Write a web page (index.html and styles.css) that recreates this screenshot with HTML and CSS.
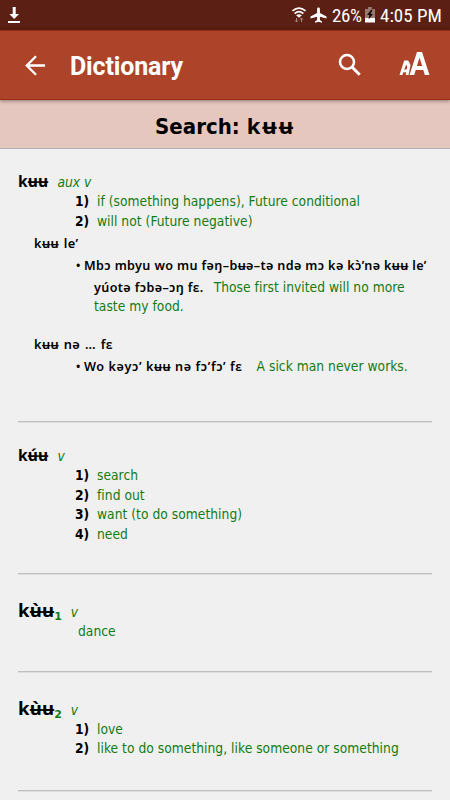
FILE: index.html
```html
<!DOCTYPE html>
<html lang="en">
<head>
<meta charset="utf-8">
<title>Dictionary</title>
<link rel="stylesheet" href="styles.css">
</head>
<body>
<div class="status">
  <svg class="download" width="14" height="18" viewBox="0 0 14 18"><path d="M5.700 1h3v7H12l-4.800 5L2.400 8h3.300zM1 15h12v2H1z" fill="#fff"/></svg>
  <svg class="wifi" width="14" height="16" viewBox="0 0 14 16"><g fill="none" stroke="#fff" stroke-width="1.600"><path d="M.5 4Q7-1.700 13.500 4M2.600 6.600Q7 2.800 11.400 6.600M4.700 9Q7 7 9.300 9"/></g><path d="M5.500 9h3L7 11z" fill="#fff"/><path d="M4.500 11v4M3 13.500l1.500 1.500L6 13.500M9.500 15v-4M8 12.500l1.500-1.500 1.500 1.500" fill="none" stroke="#b08a80"/></svg>
  <svg class="plane" width="17" height="16" viewBox="0 0 17 16"><path d="M8.500.5c-.9 0-1.400.7-1.400 1.500v4L.5 9.500v2l6.600-1.700v3.200l-2.100 1.500v1.200l3.500-.9 3.500.9v-1.200l-2.100-1.500V9.800l6.600 1.700v-2L9.900 6V2c0-.8-.5-1.500-1.400-1.500z" fill="#fff"/></svg>
  <span class="percent">26%</span>
  <svg class="battery" width="10" height="16" viewBox="0 0 10 16"><path d="M3 0h4v2h3v9H0V2h3z" fill="#98786f"/><path d="M0 11h10v4.500H0z" fill="#fff"/><path d="M6.500 2.500 2 8h2.500L3.500 12.500 8 7H5.500L7.500 3z" fill="#120300"/></svg>
  <span class="clock">4:05 PM</span>
</div>
<header class="appbar">
  <svg class="back" width="21" height="21" viewBox="0 0 21 21"><path d="M20 10.500H2M11 1.300 1.800 10.500 11 19.700" fill="none" stroke="#fff" stroke-width="2.300"/></svg>
  <h1>Dictionary</h1>
  <svg class="search" width="24" height="24" viewBox="0 0 24 24"><circle cx="9" cy="9" r="7" fill="none" stroke="#fff" stroke-width="2.500"/><path d="m14 14 7.700 7.700" stroke="#fff" stroke-width="3"/></svg>
  <svg class="size" width="31" height="25" viewBox="0 0 31 25"><g fill="#fff" fill-rule="evenodd"><path d="M.5 24 5.200 9.500h4L11.500 14 9.500 24H6.800l.3-2.700H4.300L3.300 24zM5.200 18.500h2.500l.6-2.500-1-2.500z"/><path d="M10.500 24 18 1h5l7.500 23h-4.700l-1.500-5h-7.600l-1.500 5zM17.900 15h5.300l-2.700-8.500z"/></g></svg>
</header>
<div class="banner">Search: <span class="query">kʉʉ</span></div>
<main>
  <section class="entry first">
    <div class="head"><b>kʉʉ</b><i>aux v</i></div>
    <div class="sense"><b>1)</b><span>if (something happens), Future conditional</span></div>
    <div class="sense"><b>2)</b><span>will not (Future negative)</span></div>
    <div class="phrase">kʉʉ le’</div>
    <div class="example long"><span class="bullet">•</span><b>Mbɔ mbyu wo mu fəŋ–bʉə–tə ndə mɔ kə kɔ̀’nə kʉʉ le’</b></div>
    <div class="example cont"><b>yúotə fɔbə–ɔŋ fɛ.</b><span>Those first invited will no more</span></div>
    <div class="last">taste my food.</div>
    <div class="phrase next">kʉʉ nə … fɛ</div>
    <div class="example long"><span class="bullet">•</span><b class="wo">Wo kəyɔ’ kʉʉ nə fɔ’fɔ’ fɛ</b><span>A sick man never works.</span></div>
  </section>
  <section class="entry second-entry">
    <div class="head"><b>kʉ́ʉ</b><i>v</i></div>
    <div class="sense"><b>1)</b><span>search</span></div>
    <div class="sense"><b>2)</b><span>find out</span></div>
    <div class="sense"><b>3)</b><span>want (to do something)</span></div>
    <div class="sense"><b>4)</b><span>need</span></div>
  </section>
  <section class="entry third-entry">
    <div class="head large"><b>kʉ̀ʉ</b><small>1</small><i>v</i></div>
    <div class="single">dance</div>
  </section>
  <section class="entry fourth-entry">
    <div class="head large"><b>kʉ̀ʉ</b><small>2</small><i>v</i></div>
    <div class="sense"><b>1)</b><span>love</span></div>
    <div class="sense"><b>2)</b><span>like to do something, like someone or something</span></div>
  </section>
</main>
</body>
</html>
```

FILE: styles.css
```css
* { box-sizing: border-box; }
body { margin: 0; width: 450px; height: 800px; overflow: hidden; background: #f0f0f0; color: #000; font: 13.7px/19.4px "DejaVu Sans Condensed", "DejaVu Sans", sans-serif; font-stretch: condensed; letter-spacing: .025px; white-space: nowrap; }
svg { display: block; flex: none; }
.status { height: 30px; display: flex; align-items: center; background: #5b1f13; color: #fff; font: 19px/30px Roboto, sans-serif; font-stretch: condensed; }
.download { margin-left: 7px; }
.wifi { margin-left: 271px; }
.plane { margin-left: 4px; }
.percent { width: 31px; margin: 2px 0 0 5px; letter-spacing: -.4px; }
.battery { margin-left: 2px; }
.clock { margin: 2px 0 0 5px; letter-spacing: 0; }
.appbar { height: 70px; display: flex; align-items: center; position: relative; background: #ad442a; border-top: 1px solid #8c2c17; border-bottom: 1px solid #9b2c12; box-shadow: 0 1px 4px #0006; color: #fff; }
.back { margin-left: 25px; }
.appbar h1 { width: 114px; margin: 3px 0 0 24px; font: 700 25px/30px Roboto, sans-serif; letter-spacing: -.15px; }
.search { margin-left: 154px; }
.size { margin: -3px 0 0 37px; }
.banner { height: 49px; background: #e6c7bf; border-bottom: 1px solid #adb5b8; text-align: center; font-weight: 700; font-size: 22px; line-height: 50px; }
.query { font-family: "Noto Sans", sans-serif; letter-spacing: 2px; }
main { padding: 0 18px; }
.entry { border-bottom: 1px solid #bfbfbf; box-shadow: 0 1px #dedede; }
.first { height: 273px; padding-top: 23px; }
.second-entry { height: 152px; padding-top: 24px; }
.third-entry { height: 98px; padding-top: 26px; }
.fourth-entry { height: 119px; padding-top: 26px; }
.head { display: flex; align-items: baseline; height: 20.4px; }
.head b, .phrase, .example b { font-family: "Noto Sans", sans-serif; font-weight: 700; }
.head b { font-size: 15.5px; letter-spacing: .2px; }
.head i { color: #147b14; margin-left: 9px; }
.head.large { height: 22px; }
.head.large b { font-size: 18.5px; }
.head small { color: #147b14; font: 700 11px/12px "DejaVu Sans", sans-serif; position: relative; top: 3px; }
.sense { display: flex; padding-left: 57px; color: #147b14; }
.sense b { width: 22px; color: #000; }
.phrase { padding-left: 16px; height: 22px; font-size: 12.8px; font-weight: 600; line-height: 25px; letter-spacing: .4px; word-spacing: 1px; }
.example { height: 22px; display: flex; align-items: baseline; padding-left: 57px; line-height: 23px; color: #147b14; }
.example b { font-size: 12.6px; font-weight: 600; letter-spacing: .37px; color: #000; }
.long { line-height: 25px; }
.bullet { width: 9px; font-size: 12px; color: #000; }
.cont { padding-left: 76px; line-height: 25px; }
.cont span { margin-left: 10px; }
.last { padding-left: 76px; color: #147b14; }
.next { margin-top: 15px; }
.example .wo { margin-right: 14px; letter-spacing: .6px; }
.single { padding-left: 60px; color: #147b14; }
```
